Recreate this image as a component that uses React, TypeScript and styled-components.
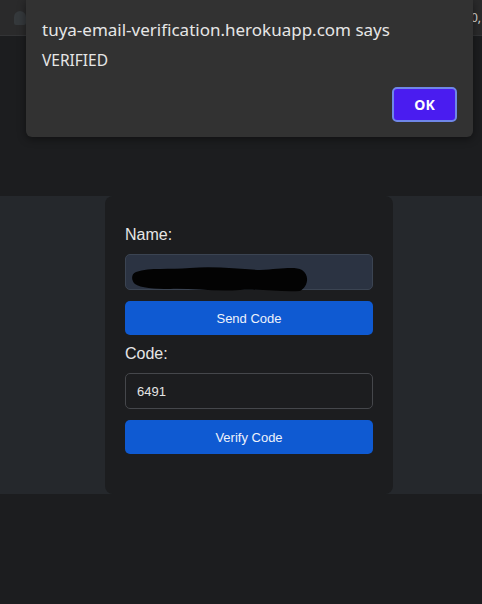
import * as React from 'react';
import styled, { createGlobalStyle } from 'styled-components';

const Global = createGlobalStyle`
  html, body { margin: 0; padding: 0; background: #1c1d1f; }
  * { box-sizing: border-box; }
`;

const Page = styled.div`
  position: relative;
  width: 482px;
  height: 604px;
  overflow: hidden;
  background: #1c1d1f;
  font-family: "Liberation Sans", Arial, sans-serif;
`;

const TopBar = styled.div`
  height: 36px;
  background: #2a2a2b;
  border-bottom: 1px solid #333436;
  display: flex;
  align-items: center;
  justify-content: space-between;
  padding: 0 0 0 14px;
`;

const FaintIcon = styled.div`
  width: 12px;
  height: 14px;
  border-radius: 6px 6px 2px 2px;
  background: #35393c;
`;

const CutText = styled.span`
  font-family: "Noto Sans", sans-serif;
  font-size: 12px;
  color: #d8d8d8;
  margin-right: 1px;
`;

const Band = styled.div`
  margin-top: 160px;
  height: 298px;
  background: #25282c;
  display: flex;
  justify-content: center;
  padding-left: 16px;
`;

const Card = styled.div`
  width: 288px;
  background: #1c1d1f;
  border-radius: 8px;
  padding: 30px 20px 0;
  display: flex;
  flex-direction: column;
`;

const Label = styled.label`
  font-size: 16px;
  line-height: 18px;
  color: #e6e6e6;
  margin-bottom: 10px;
`;

const Field = styled.div<{ $filled?: boolean }>`
  position: relative;
  height: 36px;
  border-radius: 5px;
  border: 1px solid ${p => (p.$filled ? '#3b4452' : '#45474b')};
  background: ${p => (p.$filled ? '#2b3342' : '#1c1d1f')};
  display: flex;
  align-items: center;
  padding: 0 11px;
  font-size: 13px;
  color: #e4e4e4;
  margin-bottom: 11px;
`;

const Scribble = styled.svg`
  position: absolute;
  left: 4px;
  top: 7px;
`;

const Button = styled.button<{ $gapAfter: number }>`
  height: 34px;
  border: none;
  border-radius: 5px;
  background: #0f5ad2;
  color: #eef2fb;
  font-family: "Liberation Sans", Arial, sans-serif;
  font-size: 13px;
  margin-bottom: ${p => p.$gapAfter}px;
`;

const Dialog = styled.div`
  position: absolute;
  left: 26px;
  top: 0;
  width: 447px;
  height: 137px;
  background: #323232;
  border-radius: 0 0 6px 6px;
  box-shadow: 0 2px 8px rgba(0, 0, 0, 0.45);
  padding: 18px 16px 0;
  display: flex;
  flex-direction: column;
  font-family: "Noto Sans", "Open Sans", sans-serif;
  color: #e6e6e6;
`;

const Title = styled.div`
  font-size: 17px;
  line-height: 24px;
`;

const Message = styled.div`
  font-size: 15.5px;
  line-height: 20px;
  margin-top: 8px;
`;

const Actions = styled.div`
  display: flex;
  justify-content: flex-end;
  margin-top: 17px;
`;

const OkButton = styled.button`
  width: 65px;
  height: 35px;
  background: #4a1cf0;
  border: 2px solid #6f86e8;
  border-radius: 5px;
  color: #ffffff;
  font-family: "Noto Sans", sans-serif;
  font-weight: 700;
  font-size: 14px;
`;

export default function App() {
  return (
    <Page>
      <Global />
      <TopBar>
        <FaintIcon />
        <CutText>0,</CutText>
      </TopBar>
      <Band>
        <Card>
          <Label>Name:</Label>
          <Field $filled>
            <Scribble width="180" height="32" viewBox="0 0 180 32">
              <path
                d="M6 10 C20 5 40 8 60 6 C85 4 110 7 130 8 C150 7 165 4 172 8 C180 13 178 25 170 29 C150 30 130 27 110 28 C85 30 60 26 40 27 C25 27 10 26 5 22 C1 18 1 12 6 10 Z"
                fill="#030303"
              />
            </Scribble>
          </Field>
          <Button $gapAfter={10}>Send Code</Button>
          <Label>Code:</Label>
          <Field>6491</Field>
          <Button $gapAfter={0}>Verify Code</Button>
        </Card>
      </Band>
      <Dialog>
        <Title>tuya-email-verification.herokuapp.com says</Title>
        <Message>VERIFIED</Message>
        <Actions>
          <OkButton>OK</OkButton>
        </Actions>
      </Dialog>
    </Page>
  );
}
